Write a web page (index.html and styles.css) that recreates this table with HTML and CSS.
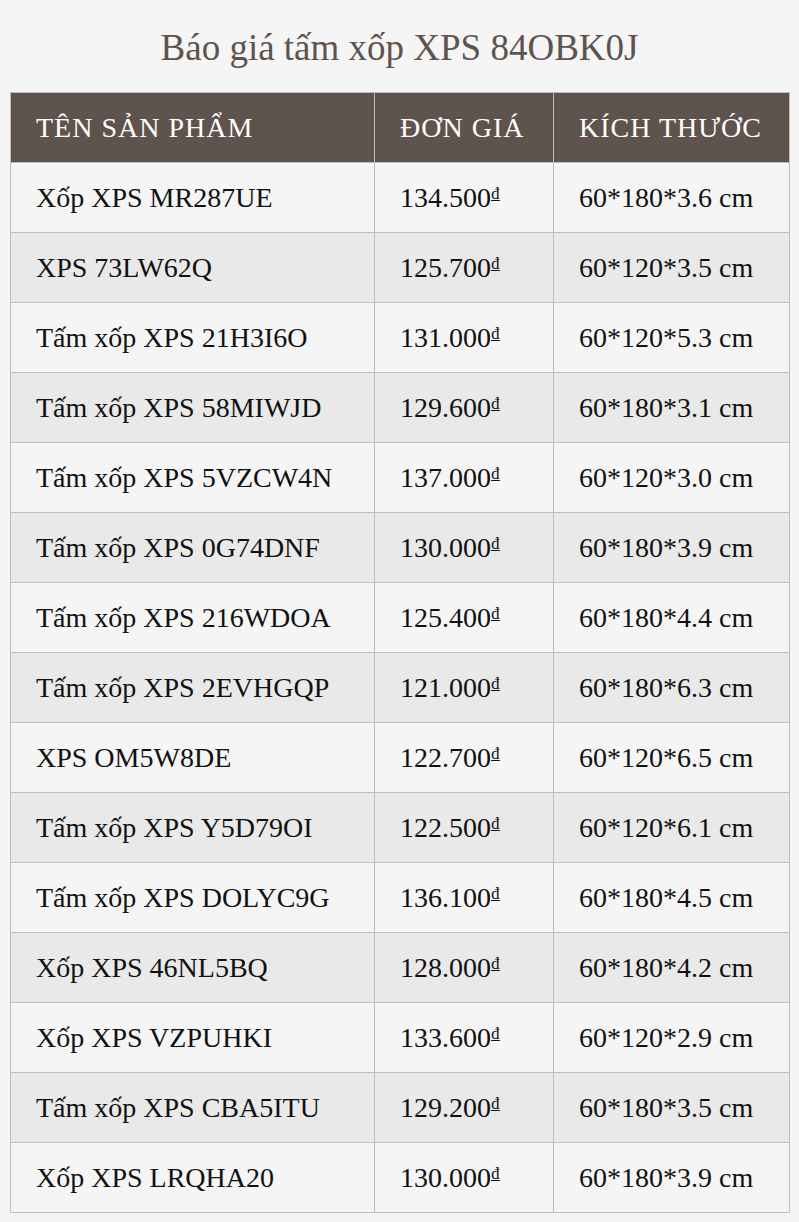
FILE: index.html
```html
<!DOCTYPE html>
<html lang="vi">
<head>
<meta charset="utf-8">
<title>Báo giá tấm xốp XPS 84OBK0J</title>
<link rel="stylesheet" href="styles.css">
</head>
<body>
<div class="wrap">
  <h2 class="title">Báo giá tấm xốp XPS 84OBK0J</h2>
  <table class="price-table">
    <colgroup>
      <col class="c-name">
      <col class="c-price">
      <col class="c-size">
    </colgroup>
    <thead>
      <tr><th>TÊN SẢN PHẨM</th><th>ĐƠN GIÁ</th><th>KÍCH THƯỚC</th></tr>
    </thead>
    <tbody>
      <tr><td>Xốp XPS MR287UE</td><td>134.500<span class="cur">₫</span></td><td>60*180*3.6 cm</td></tr>
      <tr><td>XPS 73LW62Q</td><td>125.700<span class="cur">₫</span></td><td>60*120*3.5 cm</td></tr>
      <tr><td>Tấm xốp XPS 21H3I6O</td><td>131.000<span class="cur">₫</span></td><td>60*120*5.3 cm</td></tr>
      <tr><td>Tấm xốp XPS 58MIWJD</td><td>129.600<span class="cur">₫</span></td><td>60*180*3.1 cm</td></tr>
      <tr><td>Tấm xốp XPS 5VZCW4N</td><td>137.000<span class="cur">₫</span></td><td>60*120*3.0 cm</td></tr>
      <tr><td>Tấm xốp XPS 0G74DNF</td><td>130.000<span class="cur">₫</span></td><td>60*180*3.9 cm</td></tr>
      <tr><td>Tấm xốp XPS 216WDOA</td><td>125.400<span class="cur">₫</span></td><td>60*180*4.4 cm</td></tr>
      <tr><td>Tấm xốp XPS 2EVHGQP</td><td>121.000<span class="cur">₫</span></td><td>60*180*6.3 cm</td></tr>
      <tr><td>XPS OM5W8DE</td><td>122.700<span class="cur">₫</span></td><td>60*120*6.5 cm</td></tr>
      <tr><td>Tấm xốp XPS Y5D79OI</td><td>122.500<span class="cur">₫</span></td><td>60*120*6.1 cm</td></tr>
      <tr><td>Tấm xốp XPS DOLYC9G</td><td>136.100<span class="cur">₫</span></td><td>60*180*4.5 cm</td></tr>
      <tr><td>Xốp XPS 46NL5BQ</td><td>128.000<span class="cur">₫</span></td><td>60*180*4.2 cm</td></tr>
      <tr><td>Xốp XPS VZPUHKI</td><td>133.600<span class="cur">₫</span></td><td>60*120*2.9 cm</td></tr>
      <tr><td>Tấm xốp XPS CBA5ITU</td><td>129.200<span class="cur">₫</span></td><td>60*180*3.5 cm</td></tr>
      <tr><td>Xốp XPS LRQHA20</td><td>130.000<span class="cur">₫</span></td><td>60*180*3.9 cm</td></tr>
    </tbody>
  </table>
</div>
</body>
</html>
```
FILE: styles.css
```css
html, body {
  margin: 0;
  padding: 0;
  background: #f5f5f5;
}
body {
  font-family: "Liberation Serif", "DejaVu Serif", serif;
  color: #111;
}
.wrap {
  padding: 26px 10px 10px;
}
.title {
  margin: 0 0 22px;
  text-align: center;
  font-weight: normal;
  font-size: 37px;
  line-height: 44px;
  color: #5e534d;
}
.price-table {
  width: 100%;
  border-collapse: collapse;
  table-layout: fixed;
  border: 1px solid #bdbdbd;
  font-size: 28px;
}
.c-name { width: 364px; }
.c-price { width: 179px; }
.c-size { width: 236px; }
.price-table th,
.price-table td {
  height: 70px;
  padding: 0 0 0 25px;
  text-align: left;
  border: 1px solid #bdbdbd;
  white-space: nowrap;
  box-sizing: border-box;
}
.price-table th {
  background: #5e534d;
  color: #fff;
  font-weight: normal;
  letter-spacing: 1px;
}
.price-table tbody tr:nth-child(odd) td { background: #f5f5f5; }
.price-table tbody tr:nth-child(even) td { background: #e9e9e9; }
.cur {
  font-size: 17px;
  vertical-align: 8px;
}
```
